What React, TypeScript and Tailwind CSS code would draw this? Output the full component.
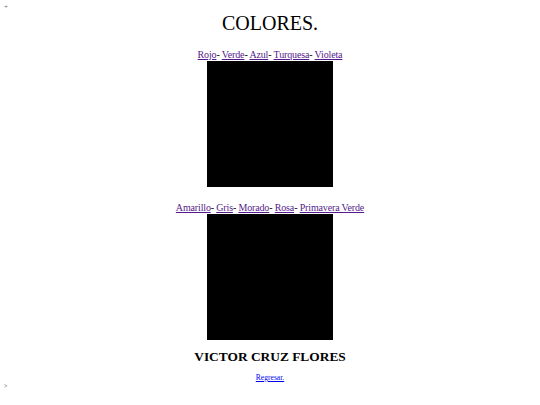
import React from "react";

function LinkRow({ items }: { items: string[] }) {
  return (
    <div className="text-[10px] tracking-[-0.15px] leading-[14px] text-center">
      {items.map((t, i) => (
        <React.Fragment key={t}>
          <a href="#" className="text-[#551a8b] underline">{t}</a>
          {i < items.length - 1 ? <span>- </span> : null}
        </React.Fragment>
      ))}
    </div>
  );
}

export default function App() {
  return (
    <div className="w-[540px] h-[405px] bg-white text-black relative font-['Liberation_Serif',_'Times_New_Roman',_serif]">
      <div className="absolute left-[4px] top-[4px] text-[7px] leading-[7px] text-[#666]">+</div>
      <div className="flex flex-col items-center pt-[11px]">
        <h1 className="text-[20px] leading-[24px] font-normal">COLORES.</h1>
        <div className="h-[13px]" />
        <LinkRow items={["Rojo", "Verde", "Azul", "Turquesa", "Violeta"]} />
        <div className="w-[126px] h-[126px] bg-black mt-[-1px]" />
        <div className="h-[14px]" />
        <LinkRow items={["Amarillo", "Gris", "Morado", "Rosa", "Primavera Verde"]} />
        <div className="w-[126px] h-[126px] bg-black mt-[-1px]" />
        <h2 className="text-[13.4px] leading-[18px] font-bold mt-[8px]">VICTOR CRUZ FLORES</h2>
        <a href="#" className="text-[7.6px] leading-[10px] text-[#0000ee] underline mt-[7px]">Regresar.</a>
      </div>
      <div className="absolute left-[4px] top-[383px] text-[6px] leading-[6px] text-[#555]">&gt;</div>
    </div>
  );
}
